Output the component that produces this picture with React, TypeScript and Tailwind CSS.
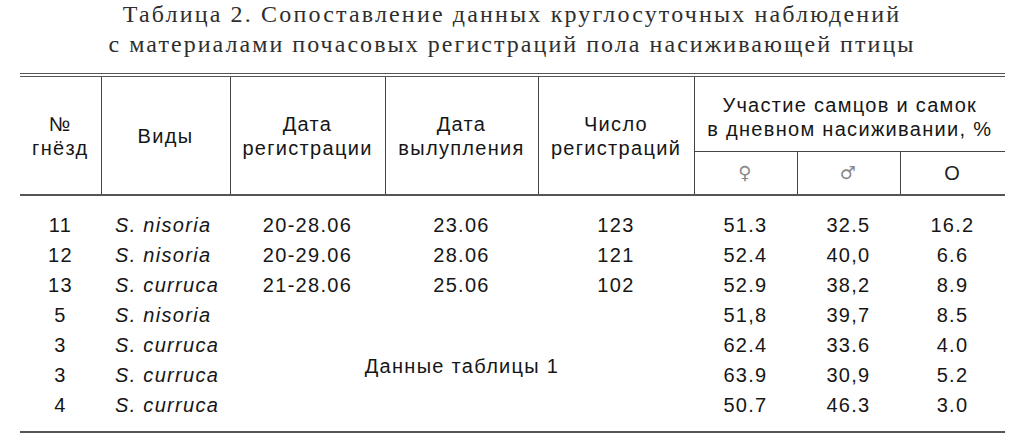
const rows = [
  ["11", "S. nisoria", "20-28.06", "23.06", "123", "51.3", "32.5", "16.2"],
  ["12", "S. nisoria", "20-29.06", "28.06", "121", "52.4", "40,0", "6.6"],
  ["13", "S. curruca", "21-28.06", "25.06", "102", "52.9", "38,2", "8.9"],
] as const;

const fromTable1 = [
  ["5", "S. nisoria", "51,8", "39,7", "8.5"],
  ["3", "S. curruca", "62.4", "33.6", "4.0"],
  ["3", "S. curruca", "63.9", "30,9", "5.2"],
  ["4", "S. curruca", "50.7", "46.3", "3.0"],
] as const;

const th = "border-l border-[#444] font-normal text-center align-middle px-1";

export default function App() {
  return (
    <div className="h-[446px] w-[1024px] overflow-hidden bg-white text-[#161616]">
      <div className="-mt-[1px] text-center font-['Liberation_Serif',serif] text-[24px] leading-[30px] text-[#2e2e2e]">
        <div className="tracking-[0.09em]">Таблица 2. Сопоставление данных круглосуточных наблюдений</div>
        <div className="tracking-[0.085em]">с материалами почасовых регистраций пола насиживающей птицы</div>
      </div>

      <table className="mx-[20px] mt-[14px] w-[985px] table-fixed border-collapse font-['Liberation_Sans',Arial,sans-serif] text-[20px] leading-[24px] tracking-[0.065em]">
        <colgroup>
          <col className="w-[81px]" />
          <col className="w-[129px]" />
          <col className="w-[155px]" />
          <col className="w-[153px]" />
          <col className="w-[156px]" />
          <col className="w-[103px]" />
          <col className="w-[103px]" />
          <col className="w-[105px]" />
        </colgroup>
        <thead className="border-t-[4px] border-double border-[#555]">
          <tr className="h-[76px]">
            <th rowSpan={2} className="text-center align-middle font-normal">
              №
              <br />
              гнёзд
            </th>
            <th rowSpan={2} className={th}>Виды</th>
            <th rowSpan={2} className={th}>
              Дата
              <br />
              регистрации
            </th>
            <th rowSpan={2} className={th}>
              Дата
              <br />
              вылупления
            </th>
            <th rowSpan={2} className={th}>
              Число
              <br />
              регистраций
            </th>
            <th colSpan={3} className={`${th} pt-[6px]`}>
              Участие самцов и самок
              <br />
              в дневном насиживании, %
            </th>
          </tr>
          <tr className="h-[44px] border-b-2 border-[#555]">
            <th className={`${th} border-t border-t-[#444] font-['DejaVu_Sans',sans-serif] text-[18px] text-[#888]`}>♀</th>
            <th className={`${th} border-t border-t-[#444] font-['DejaVu_Sans',sans-serif] text-[18px] text-[#888]`}>♂</th>
            <th className={`${th} border-t border-t-[#444] text-[#222]`}>O</th>
          </tr>
        </thead>
        <tbody className="border-b-2 border-[#555]">
          <tr className="h-[15px]">
            <td colSpan={8} />
          </tr>
          {rows.map((r, i) => (
            <tr key={i} className="h-[30px] text-center">
              <td>{r[0]}</td>
              <td className="pl-[14px] text-left italic">{r[1]}</td>
              <td>{r[2]}</td>
              <td>{r[3]}</td>
              <td>{r[4]}</td>
              <td>{r[5]}</td>
              <td>{r[6]}</td>
              <td>{r[7]}</td>
            </tr>
          ))}
          {fromTable1.map((r, i) => (
            <tr key={`t${i}`} className="h-[30px] text-center">
              <td>{r[0]}</td>
              <td className="pl-[14px] text-left italic">{r[1]}</td>
              {i === 0 && (
                <td colSpan={3} rowSpan={4} className="pt-[12px] align-middle">
                  Данные таблицы 1
                </td>
              )}
              <td>{r[2]}</td>
              <td>{r[3]}</td>
              <td>{r[4]}</td>
            </tr>
          ))}
          <tr className="h-[12px]">
            <td colSpan={8} />
          </tr>
        </tbody>
      </table>
    </div>
  );
}
